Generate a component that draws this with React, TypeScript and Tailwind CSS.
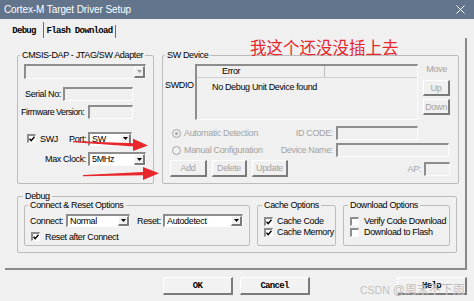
import React from 'react';

const sunken =
  'border-t-2 border-l-2 border-r border-b border-t-[#8d8d8d] border-l-[#8d8d8d] border-r-[#fcfcfc] border-b-[#fcfcfc]';
const raised =
  'border-t border-l border-r-2 border-b-2 border-t-white border-l-white border-r-[#7b7b7b] border-b-[#7b7b7b]';
const mono = "font-['Liberation_Mono',monospace] font-bold text-[9px] tracking-[-0.7px]";

function Group({
  title,
  className,
  legendClass = 'ml-[2px]',
  children,
}: {
  title: string;
  className: string;
  legendClass?: string;
  children?: React.ReactNode;
}) {
  return (
    <fieldset className={`border border-[#bcbcbc] rounded-[2px] ${className}`}>
      <legend className={`px-[2px] leading-[12px] whitespace-nowrap ${legendClass}`}>{title}</legend>
      {children}
    </fieldset>
  );
}

function Combo({ className, value, disabled }: { className: string; value?: string; disabled?: boolean }) {
  return (
    <div className={`flex ${sunken} ${disabled ? 'bg-[#f0f0f0]' : 'bg-white'} ${className}`}>
      <span className="flex-1 pl-[2px] leading-[11px] overflow-hidden whitespace-nowrap">{value}</span>
      <span className={`w-[11px] flex items-center justify-center bg-[#f0f0f0] ${raised}`}>
        <svg width="5" height="3" viewBox="0 0 5 3">
          <path d="M0 0h5L2.5 3z" fill={disabled ? '#9a9a9a' : '#000'} />
        </svg>
      </span>
    </div>
  );
}

function Field({ className }: { className: string }) {
  return <div className={`${sunken} bg-[#f0f0f0] ${className}`} />;
}

function Check({ checked }: { checked?: boolean }) {
  return (
    <span className={`w-[9px] h-[9px] shrink-0 flex items-center justify-center bg-white ${sunken}`}>
      {checked && (
        <svg width="6" height="6" viewBox="0 0 6 6">
          <path d="M0.5 2.8L2.2 4.6L5.5 0.8" stroke="#000" strokeWidth="1.4" fill="none" />
        </svg>
      )}
    </span>
  );
}

function Radio({ on }: { on?: boolean }) {
  return (
    <svg width="9" height="9" viewBox="0 0 9 9" className="shrink-0">
      <circle cx="4.5" cy="4.5" r="4" fill="#f0f0f0" stroke="#a3a3a3" />
      {on && <circle cx="4.5" cy="4.5" r="1.5" fill="#a3a3a3" />}
    </svg>
  );
}

function Btn({ className, label }: { className: string; label: string }) {
  return (
    <div className={`flex items-center justify-center text-[#a3a3a3] bg-[#f0f0f0] ${raised} ${className}`}>
      {label}
    </div>
  );
}

function BigBtn({ className, label }: { className: string; label: string }) {
  return (
    <div className={`h-[18px] w-[70px] flex items-center justify-center bg-[#f2f2f2] ${raised} ${mono} ${className}`}>
      {label}
    </div>
  );
}

export default function App() {
  return (
    <div className="relative w-[474px] h-[301px] overflow-hidden bg-[#f0f0f0] text-black font-['Liberation_Sans',Arial,sans-serif] text-[9px] leading-[12px] tracking-[-0.35px]">
      {/* title bar */}
      <div className="h-[19px] bg-[#63758d] flex items-center justify-between pl-[4px] pr-[9px]">
        <span className="text-white text-[10px] tracking-[-0.1px]">Cortex-M Target Driver Setup</span>
        <svg width="9" height="9" viewBox="0 0 9 9">
          <path d="M0.5 0.5L8.5 8.5M8.5 0.5L0.5 8.5" stroke="#fff" strokeWidth="1" />
        </svg>
      </div>

      {/* tabs */}
      <div className="h-[19px] flex items-end pl-[5px]">
        <div className={`w-[39px] h-[16px] flex items-end justify-center pb-[1px] border-r border-r-[#6b6b6b] ${mono}`}>
          Debug
        </div>
        <div className={`w-[72px] h-[13px] flex items-end justify-center pb-[1px] border-r border-r-[#6b6b6b] ${mono}`}>
          Flash Download
        </div>
      </div>

      {/* tab panel */}
      <div className="ml-[5px] w-[462px] h-[232px] border-r-2 border-b-2 border-r-[#8a8a8a] border-b-[#8a8a8a] pt-[11px] pl-[12px]">
        <div className="flex gap-[8px]">
          <Group title="CMSIS-DAP - JTAG/SW Adapter" className="w-[137px] h-[135px]">
            <Combo disabled className="mt-[3px] ml-[6px] w-[122px] h-[15px]" />
            <div className="flex items-center mt-[8px] h-[14px]">
              <span className="ml-[7px] w-[38px] whitespace-nowrap">Serial No:</span>
              <Field className="w-[70px] h-[14px]" />
            </div>
            <div className="flex items-center mt-[4px] h-[14px]">
              <span className="ml-[3px] w-[67px] whitespace-nowrap tracking-[-0.55px]">Firmware Version:</span>
              <Field className="w-[45px] h-[14px]" />
            </div>
            <div className="flex items-center mt-[13px] h-[13px]">
              <span className="ml-[9px]">
                <Check checked />
              </span>
              <span className="ml-[4px] w-[29px]">SWJ</span>
              <span className="w-[19px]">Port:</span>
              <Combo value="SW" className="w-[44px] h-[14px]" />
            </div>
            <div className="flex items-center mt-[7px] h-[14px]">
              <span className="ml-[27px] w-[43px] whitespace-nowrap">Max Clock:</span>
              <Combo value="5MHz" className="w-[58px] h-[14px]" />
            </div>
          </Group>

          <Group title="SW Device" className="w-[297px] h-[135px]">
            <div className="flex mt-[3px] h-[56px]">
              <span className="ml-[2px] w-[30px] mt-[15px]">SWDIO</span>
              <div className={`w-[223px] h-[56px] ${sunken} bg-[#f0f0f0] flex flex-col`}>
                <div className="flex h-[12px] border-b border-b-[#cfcfcf]">
                  <div className="w-[128px] border-r border-r-[#bdbdbd] pl-[25px] leading-[11px]">Error</div>
                  <div className="flex-1" />
                </div>
                <div className="pl-[15px] mt-[3px]">No Debug Unit Device found</div>
              </div>
              <div className="ml-[5px] w-[27px] flex flex-col">
                <span className="text-center text-[#a3a3a3] mt-[-1px]">Move</span>
                <Btn label="Up" className="w-[27px] h-[16px] mt-[5px]" />
                <Btn label="Down" className="w-[27px] h-[16px] mt-[3px]" />
              </div>
            </div>
            <div className="flex items-center mt-[6px] h-[14px]">
              <div className="w-[110px] flex items-center">
                <span className="ml-[9px]">
                  <Radio on />
                </span>
                <span className="ml-[3px] text-[#a3a3a3] whitespace-nowrap">Automatic Detection</span>
              </div>
              <span className="w-[63px] text-right pr-[3px] text-[#a3a3a3]">ID CODE:</span>
              <Field className="w-[82px] h-[14px]" />
            </div>
            <div className="flex items-center mt-[3px] h-[14px]">
              <div className="w-[110px] flex items-center">
                <span className="ml-[9px]">
                  <Radio />
                </span>
                <span className="ml-[3px] text-[#a3a3a3] whitespace-nowrap">Manual Configuration</span>
              </div>
              <span className="w-[63px] text-right pr-[3px] text-[#a3a3a3]">Device Name:</span>
              <Field className="w-[113px] h-[14px]" />
            </div>
            <div className="flex items-center mt-[3px] h-[17px]">
              <Btn label="Add" className="ml-[7px] w-[37px] h-[17px]" />
              <Btn label="Delete" className="ml-[5px] w-[35px] h-[17px]" />
              <Btn label="Update" className="ml-[5px] w-[36px] h-[17px]" />
              <span className="flex-1 text-right pr-[3px] text-[#a3a3a3]">AP:</span>
              <Field className="w-[26px] h-[14px] mr-[8px]" />
            </div>
          </Group>
        </div>

        <Group title="Debug" legendClass="ml-[5px]" className="mt-[6px] w-[440px] h-[63px]">
          <div className="flex gap-[7px] ml-[6px] -mt-[3px]">
            <Group title="Connect & Reset Options" legendClass="ml-[3px]" className="w-[226px] h-[47px]">
              <div className="flex items-center mt-[3px] h-[13px]">
                <span className="ml-[5px] w-[36px]">Connect:</span>
                <Combo value="Normal" className="w-[64px] h-[13px]" />
                <span className="ml-[7px] w-[26px]">Reset:</span>
                <Combo value="Autodetect" className="w-[80px] h-[13px]" />
              </div>
              <div className="flex items-center mt-[5px] h-[9px]">
                <span className="ml-[6px]">
                  <Check checked />
                </span>
                <span className="ml-[5px]">Reset after Connect</span>
              </div>
            </Group>
            <Group title="Cache Options" legendClass="ml-[4px]" className="w-[79px] h-[47px]">
              <div className="flex items-center mt-[5px] h-[10px]">
                <span className="ml-[6px]">
                  <Check checked />
                </span>
                <span className="ml-[4px]">Cache Code</span>
              </div>
              <div className="flex items-center mt-[1px] h-[10px]">
                <span className="ml-[6px]">
                  <Check checked />
                </span>
                <span className="ml-[4px]">Cache Memory</span>
              </div>
            </Group>
            <Group title="Download Options" legendClass="ml-[4px]" className="w-[107px] h-[47px]">
              <div className="flex items-center mt-[5px] h-[10px]">
                <span className="ml-[6px]">
                  <Check />
                </span>
                <span className="ml-[5px] whitespace-nowrap">Verify Code Download</span>
              </div>
              <div className="flex items-center mt-[1px] h-[10px]">
                <span className="ml-[6px]">
                  <Check />
                </span>
                <span className="ml-[5px] whitespace-nowrap">Download to Flash</span>
              </div>
            </Group>
          </div>
        </Group>
      </div>

      {/* dialog buttons */}
      <div className="flex mt-[7px]">
        <BigBtn label="OK" className="ml-[163px]" />
        <BigBtn label="Cancel" className="ml-[7px]" />
        <BigBtn label="Help" className="ml-[87px]" />
      </div>

      {/* annotations drawn over the screenshot */}
      <span className="absolute left-[250px] top-[37px] text-[16.5px] leading-[20px] tracking-normal text-[#e8262b] font-['Noto_Sans_CJK_SC',sans-serif]">
        我这个还没没插上去
      </span>
      <svg className="absolute left-0 top-0 pointer-events-none" width="474" height="301" viewBox="0 0 474 301">
        <path d="M73 141L134 143.2L134 146.4L73 142.2Z" fill="#e8262b" />
        <path d="M133 138.8L148 145.4L133 151Z" fill="#e8262b" />
        <path d="M83 175L143 172L143 175.2L83 176.2Z" fill="#e8262b" />
        <path d="M143 167L159 173.2L143 180Z" fill="#e8262b" />
      </svg>
      <span className="absolute left-[360px] top-[282px] leading-[16px] tracking-normal text-[#b8b8b8] opacity-90 whitespace-nowrap font-['Liberation_Sans','Noto_Sans_CJK_SC',sans-serif] [text-shadow:0_0_1px_#fff]">
        <span className="text-[10.5px]">CSDN </span>
        <span className="text-[12px]">@周末不下雨</span>
      </span>
    </div>
  );
}
